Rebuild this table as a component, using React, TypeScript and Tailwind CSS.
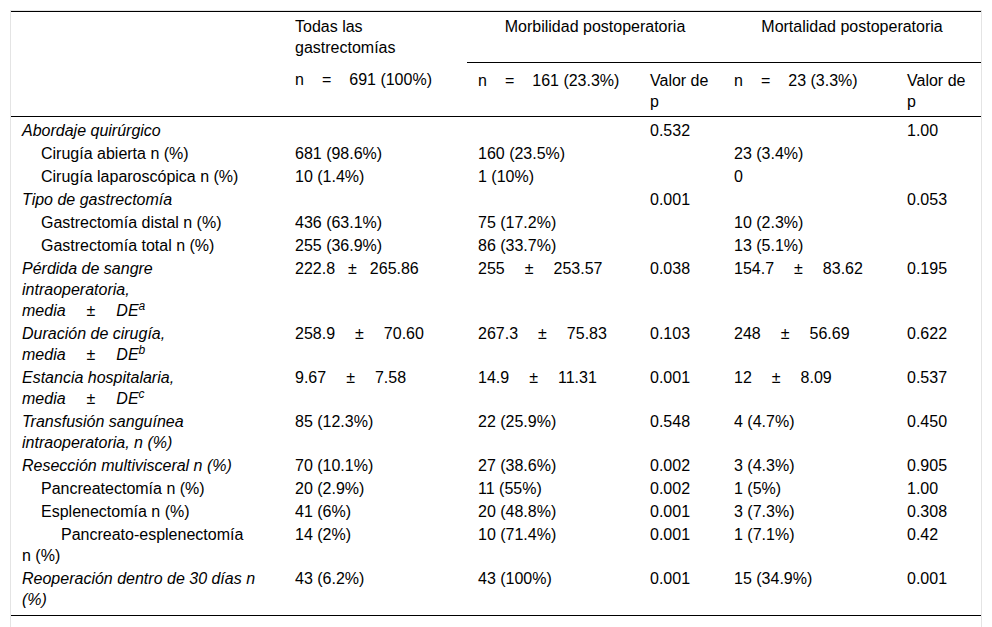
import type { ReactNode } from "react";

type Row = {
    label: ReactNode;
    cells: ReactNode[];
};

// value ± value, gap class written out in full
function Pm({ a, b, gap = "mx-[20px]" }: { a: string; b: string; gap?: string }) {
    return (
        <>
            {a}
            <span className={gap}>±</span>
            {b}
        </>
    );
}

function Md({ sup }: { sup: string }) {
    return (
        <>
            media<span className="mx-[21px]">±</span>DE<sup>{sup}</sup>
        </>
    );
}

function Eq({ v }: { v: string }) {
    return (
        <>
            n<span className="mx-[18px]">=</span>
            {v}
        </>
    );
}

const rows: Row[] = [
    { label: <i>Abordaje quirúrgico</i>, cells: ["", "", "0.532", "", "1.00"] },
    { label: <span className="pl-[19px]">Cirugía abierta n (%)</span>, cells: ["681 (98.6%)", "160 (23.5%)", "", "23 (3.4%)", ""] },
    { label: <span className="pl-[19px]">Cirugía laparoscópica n (%)</span>, cells: ["10 (1.4%)", "1 (10%)", "", "0", ""] },
    { label: <i>Tipo de gastrectomía</i>, cells: ["", "", "0.001", "", "0.053"] },
    { label: <span className="pl-[19px]">Gastrectomía distal n (%)</span>, cells: ["436 (63.1%)", "75 (17.2%)", "", "10 (2.3%)", ""] },
    { label: <span className="pl-[19px]">Gastrectomía total n (%)</span>, cells: ["255 (36.9%)", "86 (33.7%)", "", "13 (5.1%)", ""] },
    {
        label: (
            <i>
                Pérdida de sangre
                <br />
                intraoperatoria,
                <br />
                <Md sup="a" />
            </i>
        ),
        cells: [
            <Pm a="222.8" b="265.86" gap="mx-[13px]" />,
            <Pm a="255" b="253.57" />,
            "0.038",
            <Pm a="154.7" b="83.62" />,
            "0.195",
        ],
    },
    {
        label: (
            <i>
                Duración de cirugía,
                <br />
                <Md sup="b" />
            </i>
        ),
        cells: [<Pm a="258.9" b="70.60" />, <Pm a="267.3" b="75.83" />, "0.103", <Pm a="248" b="56.69" />, "0.622"],
    },
    {
        label: (
            <i>
                Estancia hospitalaria,
                <br />
                <Md sup="c" />
            </i>
        ),
        cells: [<Pm a="9.67" b="7.58" />, <Pm a="14.9" b="11.31" />, "0.001", <Pm a="12" b="8.09" />, "0.537"],
    },
    {
        label: (
            <i>
                Transfusión sanguínea
                <br />
                intraoperatoria, n (%)
            </i>
        ),
        cells: ["85 (12.3%)", "22 (25.9%)", "0.548", "4 (4.7%)", "0.450"],
    },
    { label: <i>Resección multivisceral n (%)</i>, cells: ["70 (10.1%)", "27 (38.6%)", "0.002", "3 (4.3%)", "0.905"] },
    { label: <span className="pl-[19px]">Pancreatectomía n (%)</span>, cells: ["20 (2.9%)", "11 (55%)", "0.002", "1 (5%)", "1.00"] },
    { label: <span className="pl-[19px]">Esplenectomía n (%)</span>, cells: ["41 (6%)", "20 (48.8%)", "0.001", "3 (7.3%)", "0.308"] },
    {
        label: (
            <>
                <span className="pl-[39px]">Pancreato-esplenectomía</span>
                <br />n (%)
            </>
        ),
        cells: ["14 (2%)", "10 (71.4%)", "0.001", "1 (7.1%)", "0.42"],
    },
    {
        label: (
            <i>
                Reoperación dentro de 30 días n
                <br />
                (%)
            </i>
        ),
        cells: ["43 (6.2%)", "43 (100%)", "0.001", "15 (34.9%)", "0.001"],
    },
];

export default function App() {
    return (
        <div className="min-h-screen bg-white pt-[10px] pl-[10px] font-['Liberation_Sans',Arial,sans-serif] text-[16px] leading-[21px] text-black">
            <div className="w-[972px] border-x border-t border-[#e4e4e4] pb-[20px]">
                <table className="w-[970px] table-fixed border-collapse border-t border-black">
                    <colgroup>
                        <col className="w-[273px]" />
                        <col className="w-[183px]" />
                        <col className="w-[172px]" />
                        <col className="w-[84px]" />
                        <col className="w-[173px]" />
                        <col className="w-[85px]" />
                    </colgroup>
                    <thead>
                        <tr className="align-top">
                            <th rowSpan={2} className="border-b border-black p-0 font-normal" />
                            <th className="pl-[11px] pt-[4px] pb-[4px] text-left font-normal">
                                Todas las
                                <br />
                                gastrectomías
                            </th>
                            <th colSpan={2} className="border-b border-black pt-[4px] pb-[4px] text-center font-normal">
                                Morbilidad postoperatoria
                            </th>
                            <th colSpan={2} className="border-b border-black pt-[4px] pb-[4px] text-center font-normal">
                                Mortalidad postoperatoria
                            </th>
                        </tr>
                        <tr className="align-top border-b border-black">
                            <th className="pl-[11px] pt-[7px] pb-[4px] text-left font-normal whitespace-nowrap">
                                <Eq v="691 (100%)" />
                            </th>
                            <th className="pl-[11px] pt-[7px] pb-[4px] text-left font-normal whitespace-nowrap">
                                <Eq v="161 (23.3%)" />
                            </th>
                            <th className="pl-[11px] pt-[7px] pb-[4px] text-left font-normal">
                                Valor de
                                <br />p
                            </th>
                            <th className="pl-[11px] pt-[7px] pb-[4px] text-left font-normal whitespace-nowrap">
                                <Eq v="23 (3.3%)" />
                            </th>
                            <th className="pl-[11px] pt-[7px] pb-[4px] text-left font-normal">
                                Valor de
                                <br />p
                            </th>
                        </tr>
                    </thead>
                    <tbody className="border-b border-black">
                        {rows.map((row, i) => {
                            const pad = i === 0 ? "pt-[3px] pb-px" : i === rows.length - 1 ? "pt-px pb-[5px]" : "py-px";
                            return (
                                <tr key={i} className="align-top">
                                    <td className={`pl-[11px] pr-[20px] ${pad}`}>{row.label}</td>
                                    {row.cells.map((c, j) => (
                                        <td key={j} className={`pl-[11px] whitespace-nowrap ${pad}`}>
                                            {c}
                                        </td>
                                    ))}
                                </tr>
                            );
                        })}
                    </tbody>
                </table>
            </div>
        </div>
    );
}
